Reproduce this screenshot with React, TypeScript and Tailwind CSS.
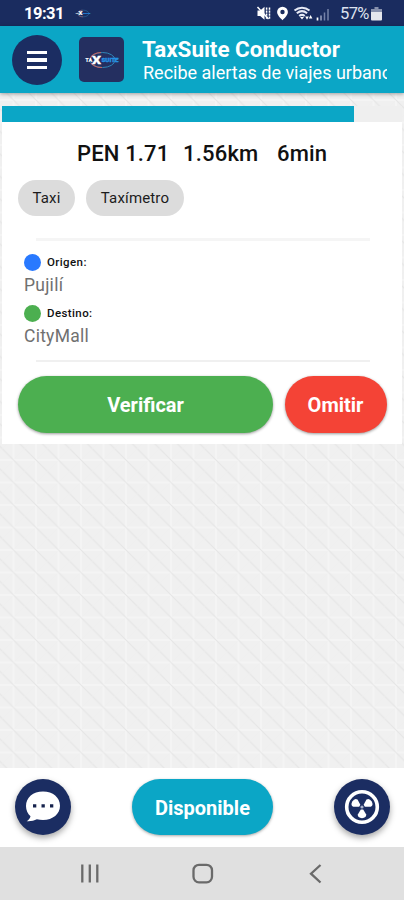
import React from "react";

function TaxiLogo({ className }: { className: string }) {
  return (
    <svg viewBox="0 0 36 20" className={className} aria-label="TaxSuite">
      <ellipse cx="18.5" cy="10" rx="12.5" ry="7.500" fill="none" stroke="#2f86b8" strokeWidth="1" />
      <path d="M6.5 8C8 4.5 12 2.800 17 2.500M7 13c2 3 6 4.500 11 4.500" fill="none" stroke="#c9605c" strokeWidth="1.1" />
      <text x="1.2" y="12" fontSize="5.500" fontWeight="900" fill="#fff" fontFamily="Roboto, sans-serif" textLength="7" lengthAdjust="spacingAndGlyphs">TA</text>
      <text x="8" y="14" fontSize="11.500" fontWeight="900" fill="#fff" stroke="#fff" strokeWidth=".3" fontFamily="Roboto, sans-serif" textLength="9" lengthAdjust="spacingAndGlyphs">X</text>
      <text x="17.500" y="12" fontSize="5.500" fontWeight="900" fill="#2593e6" stroke="#2593e6" strokeWidth=".3" fontFamily="Roboto, sans-serif" textLength="17" lengthAdjust="spacingAndGlyphs">SUITE</text>
    </svg>
  );
}

function StatusIcons() {
  return (
    <svg viewBox="0 0 80 18" className="h-[18px] w-20" fill="none">
      <path d="M5.500 6.500h2.700l4.300-3.800v13L8.200 12H5.500z" fill="#fff" />
      <path d="M5.500 3l11 12" stroke="#fff" strokeWidth="1.500" />
      <path d="M14.600 3.500v12M17.500 3.500v12" stroke="#fff" strokeWidth="1.500" strokeDasharray="2.200 .8" />
      <path fillRule="evenodd" d="M30.500 2.700a5.400 5.400 0 0 0-5.400 5.400c0 3.600 5.400 8.100 5.400 8.100s5.400-4.500 5.400-8.100a5.400 5.400 0 0 0-5.400-5.400zm0 3.100a2.200 2.200 0 1 1 0 4.400 2.200 2.200 0 0 1 0-4.400z" fill="#fff" />
      <path d="M42.500 6.500c4.500-3.800 10.500-3.800 15 0M44.800 9.300c3.200-2.700 7.200-2.700 10.300 0M47.200 12c2-1.600 3.700-1.600 5.500 0" stroke="#e6e9f5" strokeWidth="2" />
      <path d="M50 15.500l-2-2.500h4z" fill="#fff" />
      <path d="M53.200 12.500h3.600L55 15.800zM56.800 14.500h3.600l-1.800-3.500z" fill="#fff" />
      <path d="M65.500 13.500v3" stroke="#fff" strokeWidth="1.700" />
      <path d="M69 11.500v5" stroke="#9ba5c2" strokeWidth="1.500" />
      <path d="M72.500 8.500v8M76 5v11.500" stroke="#7481a8" strokeWidth="1.500" />
    </svg>
  );
}

function Backdrop() {
  return (
    <svg className="absolute inset-0 h-full w-full" aria-hidden="true">
      <defs>
        <pattern id="mesh" width="22.500" height="22.500" patternUnits="userSpaceOnUse" patternTransform="translate(13.500 7)">
          <rect width="22.500" height="22.500" fill="#f0f0f0" />
          <path d="M0 0H22.500M0 0V22.500M0 22.500H22.500M22.500 0V22.500" stroke="#f6f6f6" strokeWidth="1.600" />
          <path d="M-1 -1L23.500 23.500" stroke="#e5e5e5" strokeWidth="1" />
          <path d="M22.500 0L0 22.500" stroke="#eeeeee" strokeWidth=".6" />
        </pattern>
      </defs>
      <rect width="100%" height="100%" fill="url(#mesh)" />
    </svg>
  );
}

function Chip({ label, className }: { label: string; className: string }) {
  return (
    <span className={`flex h-9 items-center justify-center rounded-full bg-[#dcdcdc] text-[15px] tracking-[0.150px] text-[#1c1c1c] ${className}`}>
      {label}
    </span>
  );
}

function Place({ color, label, name }: { color: string; label: string; name: string }) {
  return (
    <div className="h-[51px]">
      <div className="flex h-[18px] items-center gap-[6px]">
        <span className={`size-[17px] rounded-full ${color}`} />
        <span className="pt-px text-[11.500px] font-medium tracking-[0.400px] text-[#111]">{label}</span>
      </div>
      <div className="mt-[2px] text-[17.500px] leading-[25px] tracking-[0.250px] text-[#707070]">{name}</div>
    </div>
  );
}

export default function App() {
  return (
    <div className="flex h-[900px] w-[404px] flex-col overflow-hidden bg-[#f0f0f0] font-[Roboto,sans-serif] whitespace-nowrap">
      <div className="flex h-[26px] shrink-0 items-center bg-[#1a2c5f] pl-[24px] text-white">
        <span className="w-[38px] pt-[2px] text-[16.500px] font-bold tracking-[-0.500px]">19:31</span>
        <TaxiLogo className="ml-[13px] h-[9px] w-[16px]" />
        <span className="ml-[161px] flex">
          <StatusIcons />
        </span>
        <span className="ml-[8px] w-[30px] pt-[2px] text-[16.500px] tracking-[-0.600px] text-[#dde2ee]">57%</span>
        <svg viewBox="0 0 11 14" className="ml-[1px] mt-[2px] h-[14px] w-[11px]">
          <path d="M3.500 0h4v2H11v4H0V2h3.500z" fill="#8791ad" />
          <path d="M0 5h11v7.500a1 1 0 0 1-1 1H1a1 1 0 0 1-1-1z" fill="#e5e7ed" />
        </svg>
      </div>

      <header className="relative z-10 flex h-[67px] shrink-0 items-center bg-[#0ba6c6] pl-3 shadow-[0_1px_4px_rgba(0,0,0,0.350)]">
        <button className="flex size-[50px] items-center justify-center rounded-full bg-[#1b2d62]" aria-label="Menú">
          <span className="flex w-5 flex-col gap-[4px] pt-px">
            <span className="h-[3.300px] bg-white" />
            <span className="h-[3.300px] bg-white" />
            <span className="h-[3.300px] bg-white" />
          </span>
        </button>
        <div className="ml-[17px] flex size-[45px] items-center justify-center rounded-[5px] bg-[#242f60]">
          <TaxiLogo className="h-[20px] w-[36px]" />
        </div>
        <div className="ml-[18px] w-[245px] overflow-hidden text-white">
          <div className="text-[22.400px] leading-[26px] font-bold">TaxSuite Conductor</div>
          <div className="pl-px text-[18px] leading-[22px]">Recibe alertas de viajes urbanos</div>
        </div>
      </header>

      <main className="relative flex-1">
        <Backdrop />
        <section className="relative mx-[2px] mt-[13px] h-[338px] bg-white">
          <div className="h-4 bg-[#efefef]">
            <div className="h-4 w-[352px] bg-[#0ba6c6]" />
          </div>
          <h1 className="flex h-[58px] items-center pt-[4px] pl-[75px] text-[22px] font-medium text-[#111]">
            <span className="w-[106px] tracking-[0.150px]">PEN 1.71</span>
            <span className="w-[94px] tracking-[0.200px]">1.56km</span>
            <span className="tracking-[0.150px]">6min</span>
          </h1>
          <div className="flex gap-[11px] pl-4">
            <Chip label="Taxi" className="w-[57px]" />
            <Chip label="Taxímetro" className="w-[98px]" />
          </div>
          <div className="mr-[32px] ml-[34px] mt-[22px] h-[3px] bg-[#f5f5f5]" />
          <div className="mt-[12px] h-[107px] pl-[22px]">
            <Place color="bg-[#2979ff]" label="Origen:" name="Pujilí" />
            <Place color="bg-[#4caf50]" label="Destino:" name="CityMall" />
          </div>
          <div className="mr-[32px] ml-[34px] h-[2px] bg-[#f0f0f0]" />
          <div className="mt-[14px] flex gap-[11.500px] pl-4 text-[20px] font-bold text-white">
            <button className="h-[57px] w-[255px] rounded-full bg-[#4caf50] shadow-[0_1px_3px_rgba(0,0,0,0.400)]">Verificar</button>
            <button className="h-[57px] w-[102px] rounded-full bg-[#f44336] shadow-[0_1px_3px_rgba(0,0,0,0.400)]">Omitir</button>
          </div>
        </section>
      </main>

      <footer className="relative flex h-[79px] shrink-0 items-center justify-between bg-white pr-[14px] pb-px pl-[15px]">
        <button className="flex size-14 items-center justify-center rounded-full bg-[#1b2d62] shadow-[0_3px_6px_rgba(0,0,0,0.350)]" aria-label="Mensajes">
          <svg viewBox="0 0 56 56" className="size-14">
            <path d="M28 12.500C18 12.500 11 18.500 11 27c0 4.400 1.700 7.700 4.500 10.200-.5 2-1.700 3.600-3.800 5 3.800.3 7.300-.4 10.200-1.900 2 .5 4 .7 6.100.7 10 0 17-6 17-14.200S38 12.500 28 12.500z" fill="#fff" />
            <path d="M18 25.200h3.300v3.300H18zm8.500 0h3.300v3.300h-3.300zm8.500 0h3.300v3.300H35z" fill="#16234d" />
          </svg>
        </button>
        <button className="h-14 w-[141px] rounded-full bg-[#0ba6c6] pt-[2px] text-[20px] font-bold text-white shadow-[0_1px_3px_rgba(0,0,0,0.350)]">Disponible</button>
        <button className="flex size-14 items-center justify-center rounded-full bg-[#1b2d62] shadow-[0_3px_6px_rgba(0,0,0,0.350)]" aria-label="Alerta">
          <svg viewBox="-28 -28 56 56" className="size-14" fill="#fff">
            <circle r="15.300" fill="none" stroke="#fff" strokeWidth="3.600" />
            <path id="blade" d="M-1.200 2.600h2.400l3 5Q4.500 11 0 11.200-4.500 11-4.200 7.600z" />
            <use href="#blade" transform="rotate(120)" />
            <use href="#blade" transform="rotate(240)" />
            <circle r="1.600" fill="#aab3cc" />
          </svg>
        </button>
      </footer>

      <nav className="flex h-[53px] shrink-0 bg-[#e0e0e0]">
        <svg viewBox="0 0 404 53" className="h-[53px] w-[404px]" fill="none" stroke="#6a6a6a" strokeWidth="2.300">
          <path d="M82.300 17.500v18M89.800 17.500v18M97.300 17.500v18" />
          <rect x="193.500" y="17.800" width="18.500" height="17.500" rx="5.500" />
          <path d="M320.500 18l-9.500 8.700 9.500 8.800" />
        </svg>
      </nav>
    </div>
  );
}
